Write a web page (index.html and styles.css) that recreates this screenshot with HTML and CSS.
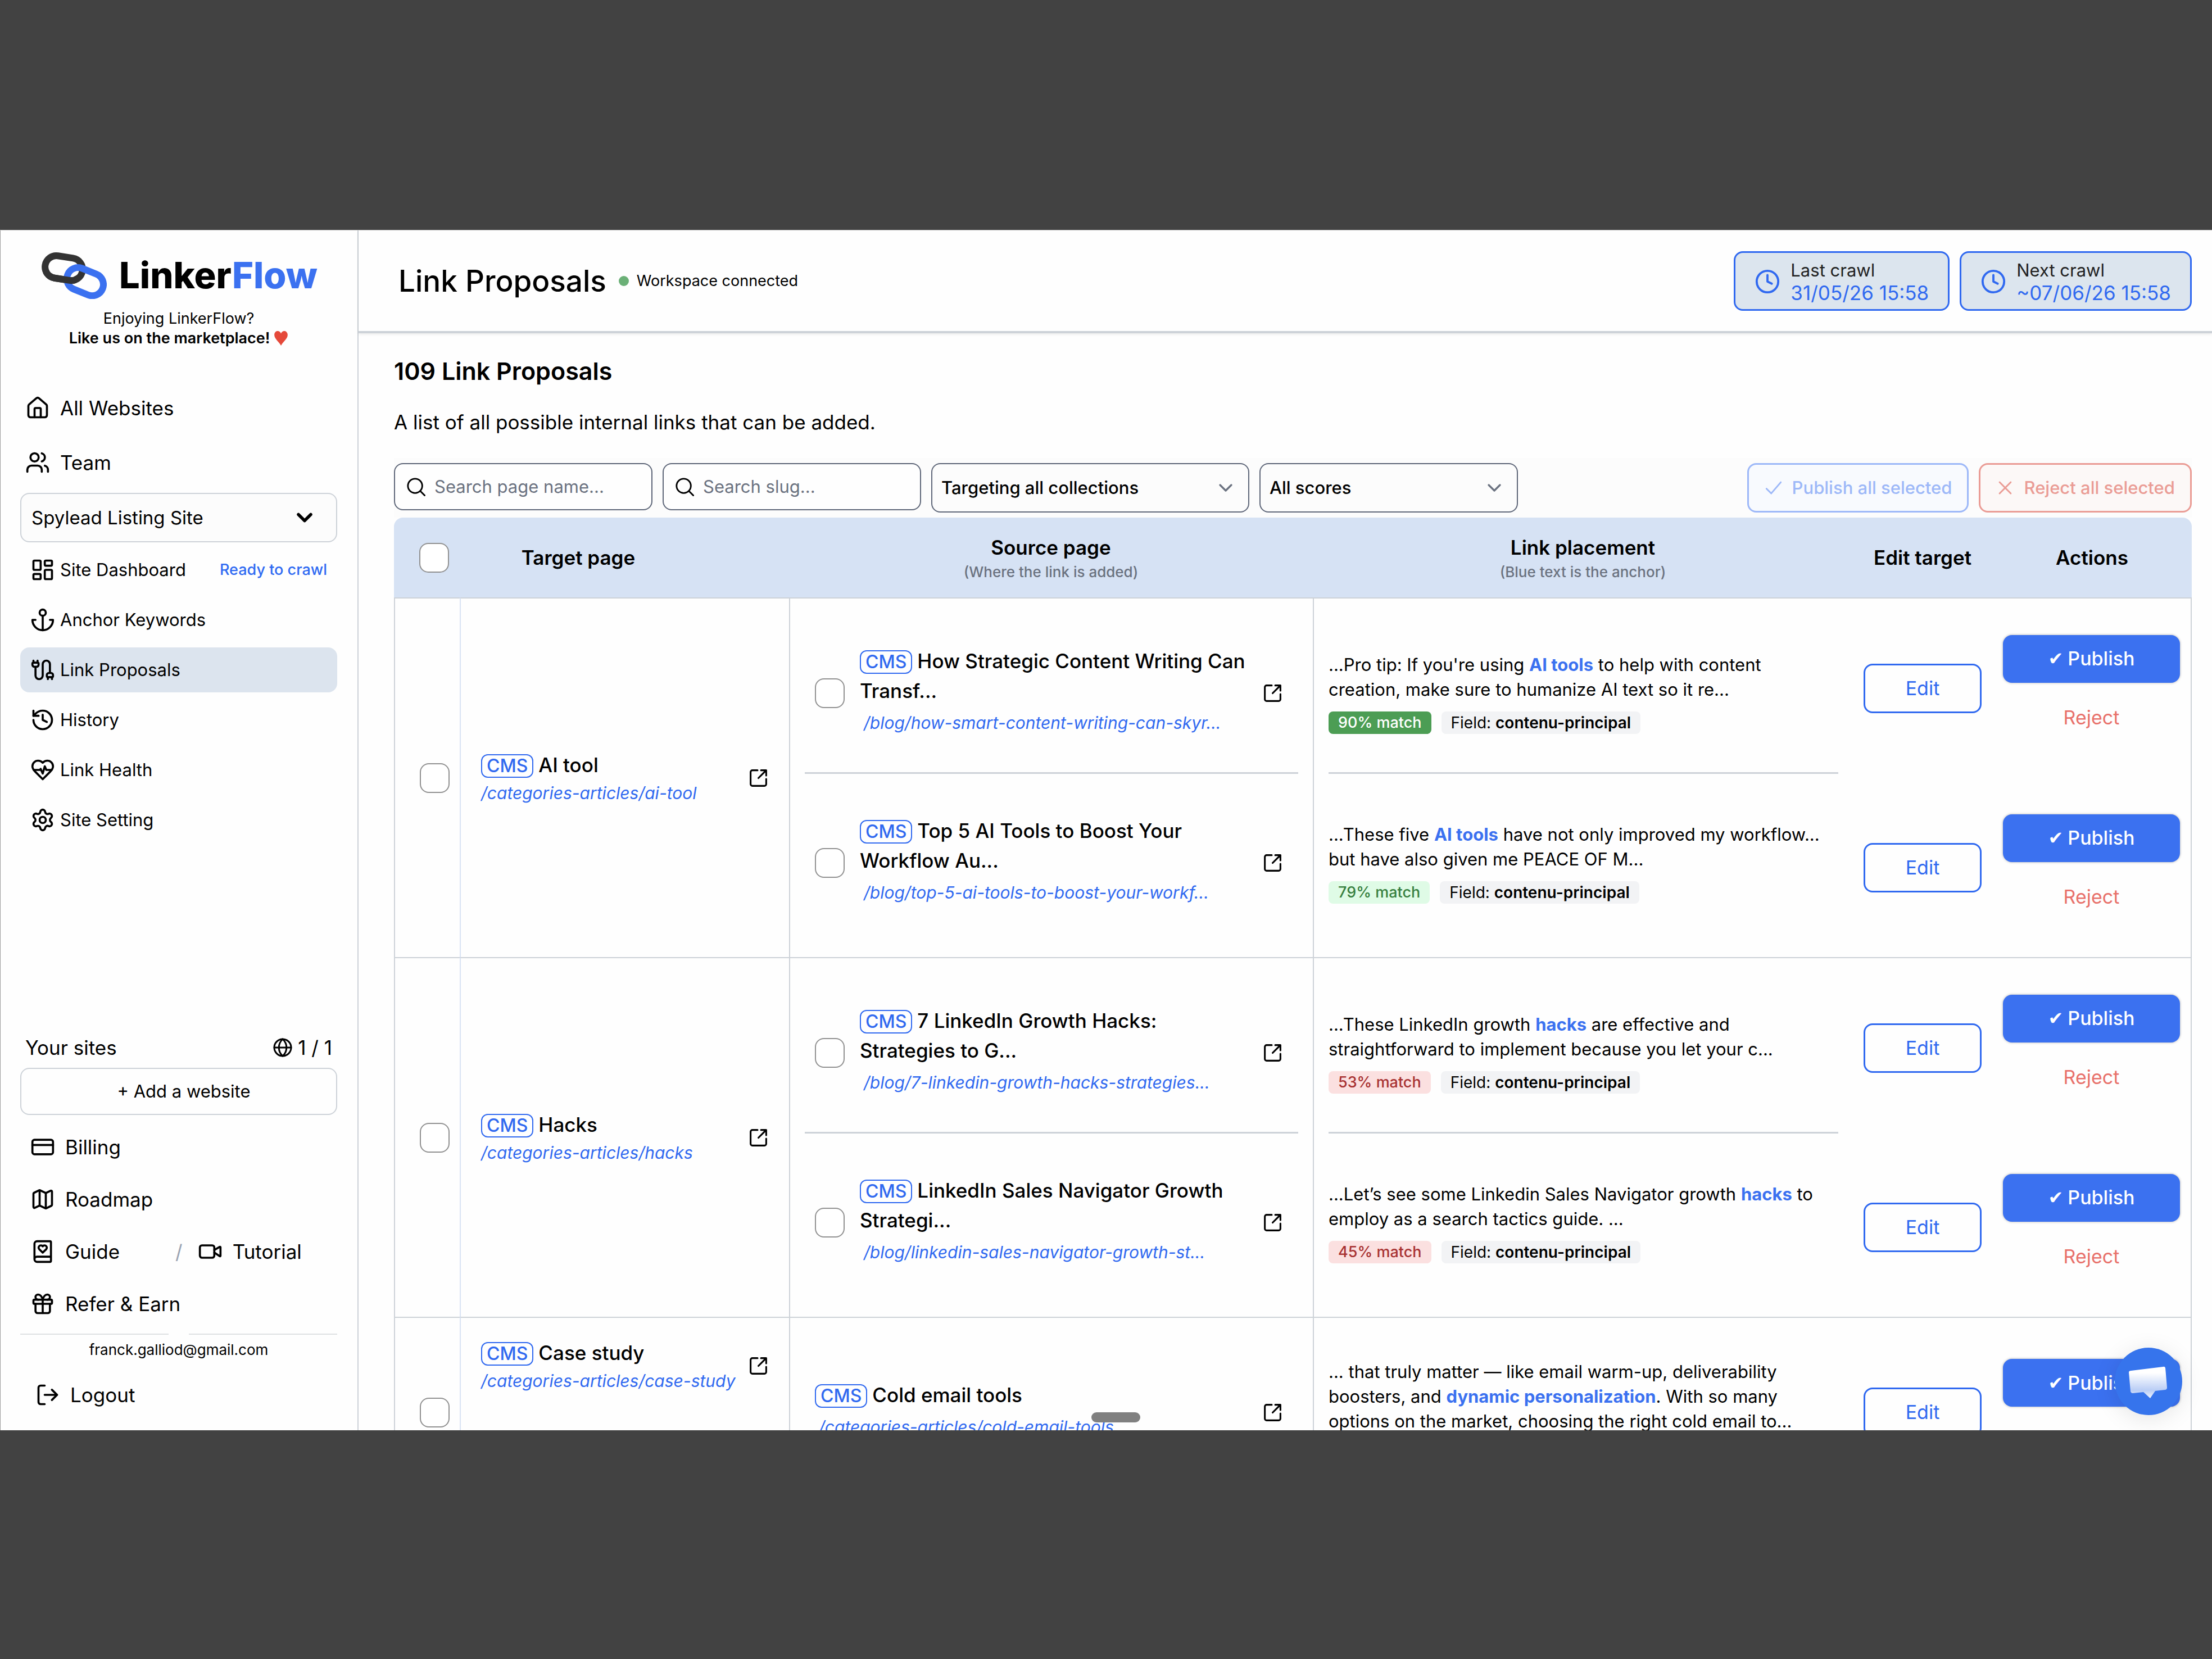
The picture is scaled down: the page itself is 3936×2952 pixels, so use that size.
FILE: index.html
```html
<!DOCTYPE html>
<html lang="en">
<head>
<meta charset="utf-8">
<title>LinkerFlow - Link Proposals</title>
<link rel="stylesheet" href="styles.css">
</head>
<body>
<svg class="sprite" aria-hidden="true">
  <symbol id="i-home" viewBox="0 0 24 24"><path d="M15 21v-8a1 1 0 0 0-1-1h-4a1 1 0 0 0-1 1v8"/><path d="M3 10a2 2 0 0 1 .709-1.528l7-5.999a2 2 0 0 1 2.582 0l7 5.999A2 2 0 0 1 21 10v9a2 2 0 0 1-2 2H5a2 2 0 0 1-2-2z"/></symbol>
  <symbol id="i-users" viewBox="0 0 24 24"><path d="M16 21v-2a4 4 0 0 0-4-4H6a4 4 0 0 0-4 4v2"/><circle cx="9" cy="7" r="4"/><path d="M22 21v-2a4 4 0 0 0-3-3.87"/><path d="M16 3.13a4 4 0 0 1 0 7.75"/></symbol>
  <symbol id="i-chevron" viewBox="0 0 24 24"><path d="m6 9 6 6 6-6"/></symbol>
  <symbol id="i-dashboard" viewBox="0 0 24 24"><rect width="7" height="9" x="3" y="3" rx="1"/><rect width="7" height="5" x="14" y="3" rx="1"/><rect width="7" height="9" x="14" y="12" rx="1"/><rect width="7" height="5" x="3" y="16" rx="1"/></symbol>
  <symbol id="i-anchor" viewBox="0 0 24 24"><path d="M12 22V8"/><path d="M5 12H2a10 10 0 0 0 20 0h-3"/><circle cx="12" cy="5" r="3"/></symbol>
  <symbol id="i-cable" viewBox="0 0 24 24"><path d="M17 21v-2a1 1 0 0 1-1-1v-1a2 2 0 0 1 2-2h2a2 2 0 0 1 2 2v1a1 1 0 0 1-1 1"/><path d="M19 15V6.5a1 1 0 0 0-7 0v11a1 1 0 0 1-7 0V9"/><path d="M21 21v-2h-4"/><path d="M3 5h4V3"/><path d="M7 5a1 1 0 0 1 1 1v1a2 2 0 0 1-2 2H4a2 2 0 0 1-2-2V6a1 1 0 0 1 1-1V3"/></symbol>
  <symbol id="i-history" viewBox="0 0 24 24"><path d="M3 12a9 9 0 1 0 9-9 9.75 9.75 0 0 0-6.74 2.74L3 8"/><path d="M3 3v5h5"/><path d="M12 7v5l4 2"/></symbol>
  <symbol id="i-heart" viewBox="0 0 24 24"><path d="M19 14c1.49-1.46 3-3.21 3-5.5A5.5 5.5 0 0 0 16.5 3c-1.76 0-3 .5-4.5 2-1.5-1.5-2.74-2-4.5-2A5.5 5.5 0 0 0 2 8.5c0 2.3 1.5 4.05 3 5.5l7 7Z"/><path d="M3.22 12H9.5l.5-1 2 4.500 2-7 1.500 3.500h5.270"/></symbol>
  <symbol id="i-settings" viewBox="0 0 24 24"><path d="M9.671 4.136a2.34 2.34 0 0 1 4.659 0 2.34 2.34 0 0 0 3.319 1.915 2.34 2.34 0 0 1 2.33 4.033 2.34 2.34 0 0 0 0 3.831 2.34 2.34 0 0 1-2.33 4.033 2.34 2.34 0 0 0-3.319 1.915 2.34 2.34 0 0 1-4.659 0 2.34 2.34 0 0 0-3.320-1.915 2.34 2.34 0 0 1-2.330-4.033 2.34 2.34 0 0 0 0-3.831A2.34 2.34 0 0 1 6.350 6.051a2.34 2.34 0 0 0 3.319-1.915"/><circle cx="12" cy="12" r="3"/></symbol>
  <symbol id="i-globe" viewBox="0 0 24 24"><circle cx="12" cy="12" r="10"/><path d="M12 2c-6 5.500-6 14.500 0 20"/><path d="M12 2c6 5.500 6 14.500 0 20"/><path d="M2 12h20"/></symbol>
  <symbol id="i-card" viewBox="0 0 24 24"><rect width="20" height="14" x="2" y="5" rx="2"/><path d="M2 10h20"/></symbol>
  <symbol id="i-map" viewBox="0 0 24 24"><path d="M14.106 5.553a2 2 0 0 0 1.788 0l3.659-1.830A1 1 0 0 1 21 4.619v12.764a1 1 0 0 1-.553.894l-4.553 2.277a2 2 0 0 1-1.788 0l-4.212-2.106a2 2 0 0 0-1.788 0l-3.659 1.830A1 1 0 0 1 3 19.381V6.618a1 1 0 0 1 .553-.894l4.553-2.277a2 2 0 0 1 1.788 0z"/><path d="M15 5.764v15"/><path d="M9 3.236v15"/></symbol>
  <symbol id="i-book" viewBox="0 0 24 24"><path d="M16 8.200A2.220 2.220 0 0 0 13.800 6c-.8 0-1.400.3-1.800.9-.4-.6-1-.9-1.800-.9A2.220 2.220 0 0 0 8 8.200c0 .6.300 1.200.700 1.600A226.652 226.652 0 0 0 12 13a404 404 0 0 0 3.300-3.100 2.413 2.413 0 0 0 .7-1.700"/><path d="M4 19.500v-15A2.500 2.500 0 0 1 6.500 2H19a1 1 0 0 1 1 1v18a1 1 0 0 1-1 1H6.500a1 1 0 0 1 0-5H20"/></symbol>
  <symbol id="i-video" viewBox="0 0 24 24"><path d="m16 13 5.223 3.482a.5.5 0 0 0 .777-.416V7.870a.5.5 0 0 0-.752-.432L16 10.500"/><rect x="2" y="6" width="14" height="12" rx="2"/></symbol>
  <symbol id="i-gift" viewBox="0 0 24 24"><rect x="3" y="8" width="18" height="4" rx="1"/><path d="M12 8v13"/><path d="M19 12v7a2 2 0 0 1-2 2H7a2 2 0 0 1-2-2v-7"/><path d="M7.500 8a2.500 2.500 0 0 1 0-5A4.800 8 0 0 1 12 8a4.800 8 0 0 1 4.500-5 2.500 2.500 0 0 1 0 5"/></symbol>
  <symbol id="i-logout" viewBox="0 0 24 24"><path d="M9 21H5a2 2 0 0 1-2-2V5a2 2 0 0 1 2-2h4"/><path d="m16 17 5-5-5-5"/><path d="M21 12H9"/></symbol>
  <symbol id="i-clock" viewBox="0 0 24 24"><circle cx="12" cy="12" r="10"/><path d="M12 6v6l4 2"/></symbol>
  <symbol id="i-search" viewBox="0 0 24 24"><circle cx="11" cy="11" r="9"/><path d="m17.500 17.500 5.500 5.500"/></symbol>
  <symbol id="i-check" viewBox="0 0 24 24"><path d="m3 13 6 6L21 5"/></symbol>
  <symbol id="i-x" viewBox="0 0 24 24"><path d="m5 5 14 14M19 5 5 19"/></symbol>
  <symbol id="i-open" viewBox="0 0 24 24"><path d="M21 3h-6M21 3l-9 9M21 3v6"/><path d="M21 13v6a2 2 0 0 1-2 2H5a2 2 0 0 1-2-2V5a2 2 0 0 1 2-2h6"/></symbol>
</svg>

<div class="window">
  <aside class="sidebar">
    <div class="side-top">
      <a class="logo" href="#">
        <svg class="logo-mark" viewBox="0 0 116 84" aria-hidden="true">
          <defs>
            <clipPath id="lower"><rect x="0" y="38" width="62" height="46"/></clipPath>
            <rect id="ring" x="-33" y="-20" width="67" height="40" rx="20"/>
          </defs>
          <g fill="none" stroke-width="12">
            <use href="#ring" stroke="#333" transform="translate(39 29) rotate(9)"/>
            <use href="#ring" stroke="#3b71f0" transform="translate(77 53) rotate(22)"/>
            <g clip-path="url(#lower)"><use href="#ring" stroke="#333" transform="translate(39 29) rotate(9)"/></g>
          </g>
        </svg>
        <span class="logo-text">Linker<span class="blue">Flow</span></span>
      </a>
      <p class="like">Enjoying LinkerFlow?<br><a href="#">Like us on the marketplace! <svg class="love" viewBox="0 0 24 26" aria-hidden="true"><path d="M12 25C9 19 1 14 1 7.500 1 3.500 3.500 1 6.500 1 9 1 11 2.500 12 5c1-2.500 3-4 5.500-4C20.500 1 23 3.500 23 7.500 23 14 15 19 12 25Z"/></svg></a></p>
      <nav class="nav-main">
        <a href="#"><svg class="icon"><use href="#i-home"/></svg>All Websites</a>
        <a href="#"><svg class="icon"><use href="#i-users"/></svg>Team</a>
      </nav>
      <div class="select site-select">
        <select aria-label="Site"><option>Spylead Listing Site</option></select>
        <svg class="icon"><use href="#i-chevron"/></svg>
      </div>
      <nav class="nav-site">
        <a href="#"><svg class="icon"><use href="#i-dashboard"/></svg>Site Dashboard<span class="status">Ready to crawl</span></a>
        <a href="#"><svg class="icon"><use href="#i-anchor"/></svg>Anchor Keywords</a>
        <a href="#" class="active" aria-current="page"><svg class="icon"><use href="#i-cable"/></svg>Link Proposals</a>
        <a href="#"><svg class="icon"><use href="#i-history"/></svg>History</a>
        <a href="#"><svg class="icon"><use href="#i-heart"/></svg>Link Health</a>
        <a href="#"><svg class="icon"><use href="#i-settings"/></svg>Site Setting</a>
      </nav>
    </div>
    <div class="side-bottom">
      <div class="sites"><span>Your sites</span><span class="count"><svg class="icon"><use href="#i-globe"/></svg>1 / 1</span></div>
      <button class="add" type="button">+ Add a website</button>
      <nav class="nav-more">
        <a href="#"><svg class="icon"><use href="#i-card"/></svg>Billing</a>
        <a href="#"><svg class="icon"><use href="#i-map"/></svg>Roadmap</a>
        <div class="pair">
          <a href="#"><svg class="icon"><use href="#i-book"/></svg>Guide</a>
          <span class="slash">/</span>
          <a href="#" class="tutorial"><svg class="icon"><use href="#i-video"/></svg>Tutorial</a>
        </div>
        <a href="#"><svg class="icon"><use href="#i-gift"/></svg>Refer &amp; Earn</a>
      </nav>
      <div class="rule"><span></span><span></span></div>
      <p class="email">franck.galliod@gmail.com</p>
      <button class="logout" type="button"><svg class="icon"><use href="#i-logout"/></svg>Logout</button>
    </div>
  </aside>

  <main class="main">
    <header class="topbar">
      <h1>Link Proposals</h1>
      <span class="dot"></span>
      <span class="connected">Workspace connected</span>
      <div class="crawls">
        <div class="crawl"><svg class="icon"><use href="#i-clock"/></svg><div><div>Last crawl</div><div class="date">31/05/26 15:58</div></div></div>
        <div class="crawl"><svg class="icon"><use href="#i-clock"/></svg><div><div>Next crawl</div><div class="date">~07/06/26 15:58</div></div></div>
      </div>
    </header>

    <div class="content">
      <h2>109 Link Proposals</h2>
      <p class="lead">A list of all possible internal links that can be added.</p>
      <div class="filters">
        <label class="search"><svg class="icon"><use href="#i-search"/></svg><input type="text" placeholder="Search page name..." aria-label="Search page name"></label>
        <label class="search"><svg class="icon"><use href="#i-search"/></svg><input type="text" placeholder="Search slug..." aria-label="Search slug"></label>
        <div class="select filter wide"><select aria-label="Collection"><option>Targeting all collections</option></select><svg class="icon"><use href="#i-chevron"/></svg></div>
        <div class="select filter"><select aria-label="Score"><option>All scores</option></select><svg class="icon"><use href="#i-chevron"/></svg></div>
        <div class="bulk">
          <button class="publish-all" type="button" disabled><svg class="icon"><use href="#i-check"/></svg>Publish all selected</button>
          <button class="reject-all" type="button" disabled><svg class="icon"><use href="#i-x"/></svg>Reject all selected</button>
        </div>
      </div>

      <table class="proposals">
        <colgroup><col class="c-check"><col class="c-target"><col class="c-source"><col><col class="c-edit"><col class="c-actions"></colgroup>
        <thead>
          <tr>
            <th class="th-pick"><input type="checkbox" aria-label="Select all"></th>
            <th class="th-target">Target page</th>
            <th class="th-two">Source page<small>(Where the link is added)</small></th>
            <th class="th-two">Link placement<small>(Blue text is the anchor)</small></th>
            <th>Edit target</th>
            <th>Actions</th>
          </tr>
        </thead>
        <tbody>
          <tr>
            <td class="pick"><input type="checkbox" aria-label="Select AI tool"></td>
            <td class="target"><div class="page"><div class="names"><div class="name"><span class="cms">CMS</span>AI tool</div><a class="slug" href="#">/categories-articles/ai-tool</a></div><a class="open" href="#" aria-label="Open AI tool"><svg class="icon"><use href="#i-open"/></svg></a></div></td>
            <td class="source">
              <div class="page block"><input type="checkbox" aria-label="Select source 1"><div class="names"><div class="name"><span class="cms">CMS</span>How Strategic Content Writing Can Transf...</div><a class="slug" href="#">/blog/how-smart-content-writing-can-skyr...</a></div><a class="open" href="#" aria-label="Open source 1"><svg class="icon"><use href="#i-open"/></svg></a></div>
              <div class="page block"><input type="checkbox" aria-label="Select source 2"><div class="names"><div class="name"><span class="cms">CMS</span>Top 5 AI Tools to Boost Your Workflow Au...</div><a class="slug" href="#">/blog/top-5-ai-tools-to-boost-your-workf...</a></div><a class="open" href="#" aria-label="Open source 2"><svg class="icon"><use href="#i-open"/></svg></a></div>
            </td>
            <td class="placement">
              <div class="block"><p>...Pro tip: If you're using <b>AI tools</b> to help with content creation, make sure to humanize AI text so it re...</p><div class="chips"><span class="chip best">90% match</span><span class="chip field">Field: <strong>contenu-principal</strong></span></div></div>
              <div class="block"><p>...These five <b>AI tools</b> have not only improved my workflow... but have also given me PEACE OF M...</p><div class="chips"><span class="chip good">79% match</span><span class="chip field">Field: <strong>contenu-principal</strong></span></div></div>
            </td>
            <td><div class="half"><button class="edit" type="button">Edit</button></div><div class="half"><button class="edit" type="button">Edit</button></div></td>
            <td><div class="half"><button class="publish" type="button"><span class="tick">✔</span> Publish</button><button class="reject" type="button">Reject</button></div><div class="half"><button class="publish" type="button"><span class="tick">✔</span> Publish</button><button class="reject" type="button">Reject</button></div></td>
          </tr>
          <tr>
            <td class="pick"><input type="checkbox" aria-label="Select Hacks"></td>
            <td class="target"><div class="page"><div class="names"><div class="name"><span class="cms">CMS</span>Hacks</div><a class="slug" href="#">/categories-articles/hacks</a></div><a class="open" href="#" aria-label="Open Hacks"><svg class="icon"><use href="#i-open"/></svg></a></div></td>
            <td class="source">
              <div class="page block"><input type="checkbox" aria-label="Select source 3"><div class="names"><div class="name"><span class="cms">CMS</span>7 LinkedIn Growth Hacks: Strategies to G...</div><a class="slug" href="#">/blog/7-linkedin-growth-hacks-strategies...</a></div><a class="open" href="#" aria-label="Open source 3"><svg class="icon"><use href="#i-open"/></svg></a></div>
              <div class="page block"><input type="checkbox" aria-label="Select source 4"><div class="names"><div class="name"><span class="cms">CMS</span>LinkedIn Sales Navigator Growth Strategi...</div><a class="slug" href="#">/blog/linkedin-sales-navigator-growth-st...</a></div><a class="open" href="#" aria-label="Open source 4"><svg class="icon"><use href="#i-open"/></svg></a></div>
            </td>
            <td class="placement">
              <div class="block"><p>...These LinkedIn growth <b>hacks</b> are effective and straightforward to implement because you let your c...</p><div class="chips"><span class="chip low">53% match</span><span class="chip field">Field: <strong>contenu-principal</strong></span></div></div>
              <div class="block"><p>...Let’s see some Linkedin Sales Navigator growth <b>hacks</b> to employ as a search tactics guide. ...</p><div class="chips"><span class="chip low">45% match</span><span class="chip field">Field: <strong>contenu-principal</strong></span></div></div>
            </td>
            <td><div class="half"><button class="edit" type="button">Edit</button></div><div class="half"><button class="edit" type="button">Edit</button></div></td>
            <td><div class="half"><button class="publish" type="button"><span class="tick">✔</span> Publish</button><button class="reject" type="button">Reject</button></div><div class="half"><button class="publish" type="button"><span class="tick">✔</span> Publish</button><button class="reject" type="button">Reject</button></div></td>
          </tr>
          <tr class="single">
            <td class="pick"><input type="checkbox" aria-label="Select Case study"></td>
            <td class="target"><div class="page"><div class="names"><div class="name"><span class="cms">CMS</span>Case study</div><a class="slug" href="#">/categories-articles/case-study</a></div><a class="open" href="#" aria-label="Open Case study"><svg class="icon"><use href="#i-open"/></svg></a></div></td>
            <td class="source">
              <div class="page block"><div class="names"><div class="name"><span class="cms">CMS</span>Cold email tools</div><a class="slug" href="#">/categories-articles/cold-email-tools</a></div><a class="open" href="#" aria-label="Open Cold email tools"><svg class="icon"><use href="#i-open"/></svg></a></div>
            </td>
            <td class="placement">
              <div class="block"><p>... that truly matter — like email warm-up, deliverability boosters, and <b>dynamic personalization</b>. With so many options on the market, choosing the right cold email to...</p><div class="chips"><span class="chip low">45% match</span><span class="chip field">Field: <strong>contenu-principal</strong></span></div></div>
            </td>
            <td><div class="half"><button class="edit" type="button">Edit</button></div></td>
            <td><div class="half"><button class="publish" type="button"><span class="tick">✔</span> Publish</button><button class="reject" type="button">Reject</button></div></td>
          </tr>
        </tbody>
      </table>
    </div>
  </main>

  <span class="scroll-thumb"></span>
  <button class="chat" type="button" aria-label="Open chat">
    <svg viewBox="0 0 120 120" aria-hidden="true">
      <defs><linearGradient id="bubble" x1="0" y1="0" x2="0" y2="1"><stop offset="0.2" stop-color="#fff"/><stop offset="0.75" stop-color="#b9cdf5"/><stop offset="1" stop-color="#f0f4fd"/></linearGradient></defs>
      <path fill="url(#bubble)" d="M29 41 86 34Q89 33 90 36L93 71Q93 74 90 75L72 77 63 90 51 79 32 81Q29 81 28 78L25 44Q25 41 29 41Z"/>
    </svg>
  </button>
</div>
</body>
</html>
```
FILE: styles.css
```css
* { box-sizing: border-box; }

body {
  margin: 0;
  height: 100vh;
  padding: 409px 0 407px;
  background: #424242;
  color: #000;
  font-family: Inter, "Liberation Sans", sans-serif;
  font-size: 35px;
  line-height: 44px;
}

h1, h2, p { margin: 0; }
a { color: inherit; text-decoration: none; }
button, input, select { font: inherit; color: inherit; margin: 0; }
button { display: flex; align-items: center; justify-content: center; padding: 0; border: 0; background: none; }

.sprite { display: none; }
.icon {
  flex: none;
  width: 44px;
  height: 44px;
  fill: none;
  stroke: currentColor;
  stroke-width: 2;
  stroke-linecap: round;
  stroke-linejoin: round;
}
.blue { color: #3b71f0; }

.window {
  position: relative;
  display: flex;
  height: 100%;
  overflow: hidden;
  background: #fefefe;
  border-top: 1px solid #c4c4c4;
}

/* Sidebar */
.sidebar {
  flex: none;
  display: flex;
  flex-direction: column;
  justify-content: space-between;
  width: 638px;
  padding: 38px 36px 17px 35px;
  border-left: 1px solid #9a9a9a;
  border-right: 2px solid #cdd2d8;
}
.logo { display: flex; align-items: center; gap: 22px; height: 84px; padding-left: 38px; }
.logo-mark { flex: none; width: 116px; height: 84px; }
.logo-text { font-size: 65px; font-weight: 800; line-height: 84px; }
.like { margin-top: 17px; font-size: 27px; line-height: 35px; text-align: center; }
.like a { font-weight: 600; }
.love { width: 26px; height: 28px; vertical-align: -5px; fill: #e5493a; }

.nav-main { margin-top: 58px; }
.nav-main a { display: flex; align-items: center; gap: 18px; height: 97px; padding-left: 9px; }

.select { position: relative; display: flex; align-items: center; }
.select select {
  width: 100%;
  height: 88px;
  padding: 0 16px;
  border: 2px solid #cdd2d8;
  border-radius: 16px;
  background: #fcfcfc;
  appearance: none;
}
.select .icon { position: absolute; right: 36px; pointer-events: none; stroke-width: 3; }
.site-select { margin-top: 6px; font-size: 33px; }
.site-select select { padding: 0 18px; }

.nav-site { display: flex; flex-direction: column; gap: 9px; margin-top: 9px; font-size: 31px; }
.nav-site a { display: flex; align-items: center; gap: 9px; height: 80px; padding: 0 18px; border-radius: 16px; }
.nav-site .active { background: #dce4ee; }
.status { margin-left: auto; color: #2f6af2; font-size: 27px; font-weight: 500; }

.sites { display: flex; justify-content: space-between; padding: 0 9px; }
.count { display: flex; align-items: center; gap: 9px; }
.count .icon { width: 36px; height: 36px; }
.add { width: 100%; height: 84px; margin-top: 14px; padding-left: 18px; border: 2px solid #cdd2d8; border-radius: 16px; font-size: 31px; }
.nav-more { margin-top: 10px; }
.nav-more a { display: flex; align-items: center; gap: 18px; height: 93px; padding-left: 18px; }
.pair { display: flex; align-items: center; }
.pair a:first-child { width: 276px; }
.slash { color: #9aa3b2; }
.nav-more .tutorial { padding-left: 27px; }
.rule { display: flex; gap: 36px; margin-top: 7px; }
.rule span { flex: 1; height: 2px; background: #dfe1e3; }
.email { margin-top: 9px; font-size: 26px; line-height: 36px; text-align: center; }
.logout { gap: 18px; height: 92px; margin-top: 16px; padding-left: 27px; }

/* Top bar */
.main { flex: 1; min-width: 0; }
.topbar {
  display: flex;
  align-items: center;
  height: 183px;
  padding: 0 36px 0 71px;
  border-bottom: 4px solid #cdd2d8;
  box-shadow: 0 2px 5px rgba(0, 0, 0, 0.08);
}
h1 { font-size: 53px; font-weight: 500; line-height: 64px; }
.dot { width: 18px; height: 18px; margin: 0 14px 0 22px; border-radius: 50%; background: #6bb077; }
.connected { font-size: 27px; }
.crawls { display: flex; gap: 18px; margin-left: auto; }
.crawl {
  display: flex;
  align-items: center;
  gap: 18px;
  height: 106px;
  padding: 2px 34px 0;
  border: 3px solid #3069f0;
  border-radius: 16px;
  background: #dce5ee;
  color: #222;
  font-size: 31px;
  line-height: 40px;
}
.crawl .icon, .date { color: #3069f0; }
.crawl .icon { width: 46px; height: 46px; }
.date { font-size: 35px; }

/* Filters */
.content { padding: 39px 36px 0 63px; }
h2 { font-size: 43px; font-weight: 600; line-height: 56px; }
.lead { margin-top: 41px; }
.filters { display: flex; align-items: flex-start; gap: 18px; margin-top: 42px; padding: 9px 0 9px; background: #fcfcfc; font-size: 31px; }
.search {
  display: flex;
  align-items: center;
  gap: 16px;
  width: 460px;
  height: 84px;
  padding: 0 20px;
  border: 2px solid #5f6779;
  border-radius: 16px;
  background: #fefefe;
}
.search .icon { width: 34px; height: 34px; stroke-width: 2; }
.search input { flex: 1; min-width: 0; padding: 0; border: 0; background: none; outline: 0; }
.search input::placeholder { color: #6b7280; opacity: 1; }
.filter { width: 460px; font-weight: 500; }
.filter.wide { width: 566px; }
.filter select { border-color: #5f6779; }
.filter .icon { right: 22px; width: 40px; height: 40px; stroke-width: 2; color: #6b7280; }
.bulk { display: flex; gap: 18px; margin-left: auto; }
.bulk button { gap: 16px; height: 88px; padding: 0 27px; border: 3px solid; border-radius: 16px; font-weight: 500; }
.bulk .icon { width: 34px; height: 34px; }
.publish-all { background: #f8fafe; color: #9db8f8; }
.reject-all { background: #fcf8f7; color: #ea9c95; }

/* Table */
.proposals { width: 100%; table-layout: fixed; border-collapse: separate; border-spacing: 0; }
.c-check { width: 117px; }
.c-target { width: 586px; }
.c-source { width: 932px; }
.c-edit { width: 248px; }
.c-actions { width: 355px; }
.proposals th { height: 142px; padding: 0; background: #d6e2f4; font-weight: 600; }
.proposals th:first-child { border-top-left-radius: 16px; }
.proposals th:last-child { border-top-right-radius: 16px; }
.proposals .th-pick { padding-left: 26px; }
.proposals .th-target { padding-right: 164px; }
.proposals .th-two { padding-top: 8px; }
th small { display: block; color: #6b7280; font-size: 26px; font-weight: 500; }
.proposals td { padding: 0; border-top: 2px solid #cdd2d8; vertical-align: middle; }
.proposals td:first-child { border-left: 2px solid #cdd2d8; }
.proposals td:last-child { border-right: 2px solid #cdd2d8; }
.proposals .pick { padding-left: 26px; text-align: center; }
.proposals .target { border-left: 2px solid #d9e3f4; padding: 0 36px; }
.proposals .source { border-left: 2px solid #cdd2d8; padding: 0 26px; }
.proposals .placement { border-left: 2px solid #cdd2d8; padding: 0 26px; }

input[type="checkbox"] {
  flex: none;
  display: inline-block;
  width: 53px;
  height: 53px;
  border: 2px solid #919191;
  border-radius: 16px;
  background: #fff;
  appearance: none;
  vertical-align: middle;
}

.page { display: flex; align-items: center; }
.names { flex: 1; min-width: 0; }
.name { font-weight: 500; line-height: 53px; }
.cms {
  display: inline-block;
  height: 42px;
  margin-right: 9px;
  padding: 0 8px;
  border: 2px solid #3069f0;
  border-radius: 12px;
  color: #3069f0;
  font-size: 32px;
  line-height: 38px;
}
.slug { display: block; color: #3069f0; font-size: 30px; font-style: italic; line-height: 46px; white-space: nowrap; }
.open { display: flex; }
.open .icon { width: 37px; height: 37px; }

.block { min-height: 282px; }
.block:not(:last-child) { min-height: 285px; border-bottom: 3px solid #cdd2d8; }
.block:not(:first-child) { margin-top: 17px; }
.source .block { padding: 0 27px 0 18px; }
.source .names { margin-left: 27px; padding: 0 14px 8px 0; }
.source .slug { margin-top: 7px; padding-left: 7px; }
.placement .block { display: flex; flex-direction: column; justify-content: center; font-size: 31px; }
.block p { padding-right: 18px; }
.block b { color: #3b71f0; font-weight: 700; }
.chips { display: flex; gap: 18px; margin-top: 17px; font-size: 27px; line-height: 40px; }
.chip { padding: 0 17px; border-radius: 8px; font-weight: 500; }
.field { background: #f2f3f5; font-size: 28px; font-weight: 400; }
.field strong { font-weight: 600; }
.best { background: #4c9d54; color: #fff; }
.good { background: #dffbe6; color: #38803f; }
.low { background: #fbe0e0; color: #a83232; }

.half { display: flex; flex-direction: column; align-items: stretch; justify-content: center; gap: 20px; height: 319px; padding: 0 19px; }
.half button { height: 85px; border-radius: 16px; font-size: 34px; }
.half .edit { height: 88px; border: 3px solid #3069f0; color: #3069f0; }
.publish { gap: 8px; background: #3b71f0; color: #fff; font-weight: 500; box-shadow: 0 0 4px rgba(0, 0, 0, 0.3); }
.tick { font-family: "DejaVu Sans", sans-serif; font-size: 32px; }
.reject { color: #e8716b; }

.single .half { height: 336px; }
.single .target { vertical-align: top; padding-top: 36px; }
.single .source .names { margin-left: 0; }

/* Overlays */
.scroll-thumb { position: absolute; left: 1942px; bottom: 14px; width: 87px; height: 18px; border-radius: 9px; background: #808080; }
.chat {
  position: absolute;
  right: 53px;
  bottom: 27px;
  width: 120px;
  height: 120px;
  border-radius: 50%;
  background: #3674ec;
  box-shadow: 0 6px 40px rgba(0, 0, 0, 0.1);
}
.chat svg { width: 120px; height: 120px; }
```
